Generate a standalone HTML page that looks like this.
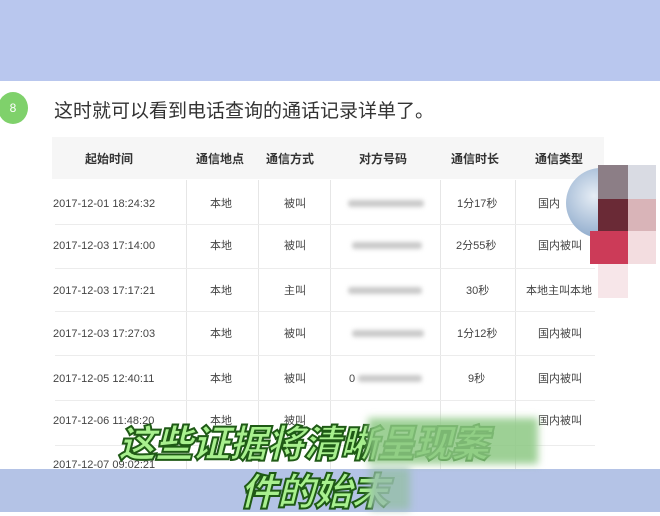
<!DOCTYPE html>
<html><head><meta charset="utf-8"><style>
*{margin:0;padding:0;box-sizing:border-box}
body{width:660px;height:512px;overflow:hidden;position:relative;background:#fff;font-family:"Liberation Sans","Noto Sans CJK SC",sans-serif;color:#444}
.top{position:absolute;left:0;top:0;width:660px;height:81px;background:#b9c7ee}
.bot{position:absolute;left:0;top:469px;width:660px;height:43px;background:#b4c3e6}
.num{position:absolute;top:92px;width:30px;height:32px;border-radius:50%;background:#7fd16b;color:#fff;font-size:12px;text-align:center;line-height:32px;left:-2px}
.title{position:absolute;left:54px;top:96px;font-size:19px;color:#333}
.hdr{position:absolute;left:52px;top:137px;width:552px;height:42px;background:#f6f6f6}
.c{position:absolute;font-size:11px;line-height:14px;height:14px;color:#444;text-align:center;white-space:nowrap}
.h{font-weight:bold;font-size:12px;color:#333}
.vl{position:absolute;width:1px;background:#e6e6e6;top:180px;height:290px}
.hl{position:absolute;height:1px;background:#ececec;left:55px;width:540px}
.blur{position:absolute;height:7px;background:#c9c9c9;filter:blur(2px);border-radius:3px}
.sub{position:absolute;font-size:38px;font-weight:900;font-style:italic;color:#a8f08e;-webkit-text-stroke:2px #1f5a16;letter-spacing:-1px;white-space:nowrap;font-family:"Noto Sans CJK SC",sans-serif;line-height:46px}
</style></head><body>
<div class="top"></div>
<div class="num">8</div>
<div class="title">这时就可以看到电话查询的通话记录详单了。</div>
<div class="hdr"></div>
<div class="c h" style="left:85px;top:152px">起始时间</div>
<div class="c h" style="left:196px;top:152px">通信地点</div>
<div class="c h" style="left:266px;top:152px">通信方式</div>
<div class="c h" style="left:359px;top:152px">对方号码</div>
<div class="c h" style="left:451px;top:152px">通信时长</div>
<div class="c h" style="left:535px;top:152px">通信类型</div>
<div class="vl" style="left:186px"></div><div class="vl" style="left:258px"></div><div class="vl" style="left:330px"></div><div class="vl" style="left:440px"></div><div class="vl" style="left:515px"></div>
<div class="hl" style="top:224px"></div><div class="hl" style="top:268px"></div><div class="hl" style="top:311px"></div><div class="hl" style="top:355px"></div><div class="hl" style="top:400px"></div><div class="hl" style="top:445px"></div>

<div class="c" style="left:53px;top:197px">2017-12-01 18:24:32</div><div class="c" style="left:210px;top:197px">本地</div><div class="c" style="left:284px;top:197px">被叫</div><div class="blur" style="left:348px;top:200px;width:76px"></div><div class="c" style="left:457px;top:197px">1分17秒</div><div class="c" style="left:538px;top:197px">国内</div>
<div class="c" style="left:53px;top:239px">2017-12-03 17:14:00</div><div class="c" style="left:210px;top:239px">本地</div><div class="c" style="left:284px;top:239px">被叫</div><div class="blur" style="left:352px;top:242px;width:70px"></div><div class="c" style="left:456px;top:239px">2分55秒</div><div class="c" style="left:538px;top:239px">国内被叫</div>
<div class="c" style="left:53px;top:284px">2017-12-03 17:17:21</div><div class="c" style="left:210px;top:284px">本地</div><div class="c" style="left:284px;top:284px">主叫</div><div class="blur" style="left:348px;top:287px;width:74px"></div><div class="c" style="left:466px;top:284px">30秒</div><div class="c" style="left:526px;top:284px">本地主叫本地</div>
<div class="c" style="left:53px;top:327px">2017-12-03 17:27:03</div><div class="c" style="left:210px;top:327px">本地</div><div class="c" style="left:284px;top:327px">被叫</div><div class="blur" style="left:352px;top:330px;width:72px"></div><div class="c" style="left:457px;top:327px">1分12秒</div><div class="c" style="left:538px;top:327px">国内被叫</div>
<div class="c" style="left:53px;top:372px">2017-12-05 12:40:11</div><div class="c" style="left:210px;top:372px">本地</div><div class="c" style="left:284px;top:372px">被叫</div><div class="c" style="left:349px;top:372px">0</div><div class="blur" style="left:358px;top:375px;width:64px"></div><div class="c" style="left:468px;top:372px">9秒</div><div class="c" style="left:538px;top:372px">国内被叫</div>
<div class="c" style="left:53px;top:414px">2017-12-06 11:48:20</div><div class="c" style="left:210px;top:414px">本地</div><div class="c" style="left:284px;top:414px">被叫</div><div class="c" style="left:538px;top:414px">国内被叫</div>
<div class="c" style="left:53px;top:458px">2017-12-07 09:02:21</div>

<div style="position:absolute;left:566px;top:168px;width:70px;height:70px;border-radius:50%;background:radial-gradient(circle at 40% 40%,#e6edf5,#6f93bd)"></div>
<div style="position:absolute;left:598px;top:165px;width:30px;height:34px;background:#8c7e86"></div>
<div style="position:absolute;left:628px;top:165px;width:28px;height:34px;background:#d9dbe3"></div>
<div style="position:absolute;left:598px;top:199px;width:30px;height:32px;background:#6a2a36"></div>
<div style="position:absolute;left:628px;top:199px;width:28px;height:32px;background:#d9b4b8"></div>
<div style="position:absolute;left:590px;top:231px;width:38px;height:33px;background:#cc3b58"></div>
<div style="position:absolute;left:628px;top:231px;width:28px;height:33px;background:#f3dde0"></div>
<div style="position:absolute;left:598px;top:264px;width:30px;height:34px;background:#f7e6e9"></div>

<div class="bot"></div>
<div class="sub" style="left:118px;top:418px">这些证据将清晰呈现案</div>
<div class="sub" style="left:240px;top:466px">件的始末</div>
<div style="position:absolute;left:368px;top:418px;width:170px;height:46px;background:rgba(140,200,130,.85);filter:blur(4px)"></div>
<div style="position:absolute;left:370px;top:468px;width:40px;height:42px;background:rgba(150,190,170,.85);filter:blur(4px)"></div>
</body></html>
